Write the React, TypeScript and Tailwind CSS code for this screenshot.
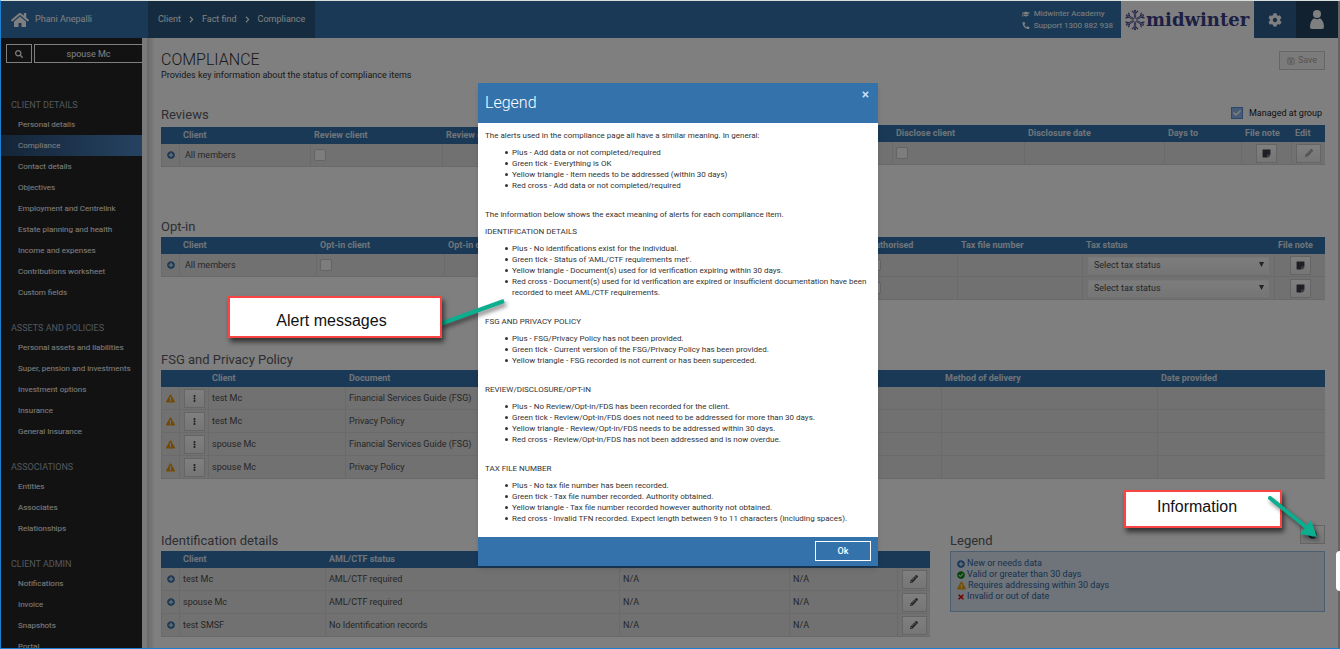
import { ReactNode } from "react";
import {
  FaCheck,
  FaCheckCircle,
  FaChevronRight,
  FaCog,
  FaEllipsisV,
  FaExclamationTriangle,
  FaGraduationCap,
  FaHome,
  FaInfoCircle,
  FaPencilAlt,
  FaPhoneAlt,
  FaPlusCircle,
  FaRegSave,
  FaSearch,
  FaStickyNote,
  FaTimes,
} from "react-icons/fa";

const NAV = [
  {
    title: "CLIENT DETAILS",
    items: [
      "Personal details",
      "Compliance",
      "Contact details",
      "Objectives",
      "Employment and Centrelink",
      "Estate planning and health",
      "Income and expenses",
      "Contributions worksheet",
      "Custom fields",
    ],
  },
  {
    title: "ASSETS AND POLICIES",
    items: [
      "Personal assets and liabilities",
      "Super, pension and investments",
      "Investment options",
      "Insurance",
      "General Insurance",
    ],
  },
  { title: "ASSOCIATIONS", items: ["Entities", "Associates", "Relationships"] },
  { title: "CLIENT ADMIN", items: ["Notifications", "Invoice", "Snapshots", "Portal"] },
];

const FSG_ROWS = [
  ["test Mc", "Financial Services Guide (FSG)"],
  ["test Mc", "Privacy Policy"],
  ["spouse Mc", "Financial Services Guide (FSG)"],
  ["spouse Mc", "Privacy Policy"],
];

const ID_ROWS = [
  ["test Mc", "AML/CTF required"],
  ["spouse Mc", "AML/CTF required"],
  ["test SMSF", "No Identification records"],
];

const LEGEND_GENERAL = [
  "Plus - Add data or not completed/required",
  "Green tick - Everything is OK",
  "Yellow triangle - Item needs to be addressed (within 30 days)",
  "Red cross - Add data or not completed/required",
];

const LEGEND_SECTIONS = [
  {
    title: "IDENTIFICATION DETAILS",
    items: [
      "Plus - No identifications exist for the individual.",
      "Green tick - Status of 'AML/CTF requirements met'.",
      "Yellow triangle - Document(s) used for id verification expiring within 30 days.",
      "Red cross - Document(s) used for id verification are expired or insufficient documentation have been recorded to meet AML/CTF requirements.",
    ],
  },
  {
    title: "FSG AND PRIVACY POLICY",
    items: [
      "Plus - FSG/Privacy Policy has not been provided.",
      "Green tick - Current version of the FSG/Privacy Policy has been provided.",
      "Yellow triangle - FSG recorded is not current or has been superceded.",
    ],
  },
  {
    title: "REVIEW/DISCLOSURE/OPT-IN",
    items: [
      "Plus - No Review/Opt-in/FDS has been recorded for the client.",
      "Green tick - Review/Opt-in/FDS does not need to be addressed for more than 30 days.",
      "Yellow triangle - Review/Opt-in/FDS needs to be addressed within 30 days.",
      "Red cross - Review/Opt-in/FDS has not been addressed and is now overdue.",
    ],
  },
  {
    title: "TAX FILE NUMBER",
    items: [
      "Plus - No tax file number has been recorded.",
      "Green tick - Tax file number recorded. Authority obtained.",
      "Yellow triangle - Tax file number recorded however authority not obtained.",
      "Red cross - Invalid TFN recorded. Expect length between 9 to 11 characters (including spaces).",
    ],
  },
];

function Snowflake() {
  const angles = [0, 60, 120, 180, 240, 300];
  return (
    <svg viewBox="0 0 24 24" className="size-[22px] shrink-0" fill="none" stroke="#45488c">
      {angles.map((deg) => (
        <g key={deg} transform={`rotate(${deg} 12 12)`}>
          <path d="M12 9V1" strokeWidth="2.4" />
          <path d="M8.600 2L12 5.200L15.400 2" strokeWidth="1.3" />
          <path d="M12 8.500V1.800" stroke="#ffffff" strokeWidth="0.6" />
        </g>
      ))}
      <circle cx="12" cy="12" r="2.4" strokeWidth="1" />
    </svg>
  );
}

function Header() {
  return (
    <header className="flex h-[37px] shrink-0 bg-[#3472ac] text-white">
      <a href="#home" className="flex w-[148px] items-center gap-[6px] pl-[11px]">
        <FaHome className="size-[18px]" />
        Phani Anepalli
      </a>
      <nav aria-label="Breadcrumb" className="flex items-center gap-2 bg-[#2a567f] px-[10px]">
        <a href="#client">Client</a>
        <FaChevronRight className="size-[7px] w-[5px]" />
        <a href="#fact-find">Fact find</a>
        <FaChevronRight className="size-[7px] w-[5px]" />
        <a href="#compliance">Compliance</a>
      </nav>
      <div className="ml-auto flex flex-col justify-center pr-2 text-[8px] leading-[12px]">
        <a href="#academy" className="flex items-center gap-1">
          <FaGraduationCap className="size-[8px]" />
          Midwinter Academy
        </a>
        <a href="#support" className="flex items-center gap-1">
          <FaPhoneAlt className="size-[7px] w-[8px]" />
          Support 1300 882 938
        </a>
      </div>
      <div className="flex w-[133px] items-center bg-white pl-[3px] text-[#3c3f88]">
        <Snowflake />
        <span className="font-['DejaVu_Serif',serif] text-[18px] leading-[24px] font-bold">midwinter</span>
      </div>
      <button aria-label="Settings" className="flex w-[42px] items-center justify-center bg-[#2e5e8e]">
        <FaCog className="size-[14px]" />
      </button>
      <button aria-label="Account" className="flex w-[42px] items-center justify-center bg-[#22425f]">
        <svg viewBox="0 0 14 19" className="h-[19px] w-[14px]" fill="currentColor">
          <circle cx="7" cy="4" r="4" />
          <path d="M4 8.200Q7 10.400 10 8.200Q14 11 14 17Q14 19 12 19H2Q0 19 0 17Q0 11 4 8.200Z" />
        </svg>
      </button>
    </header>
  );
}

function Sidebar() {
  return (
    <aside className="w-[142px] shrink-0 overflow-hidden bg-[#252525] text-white">
      <div className="flex gap-[2px] pt-[6px] pl-[6px]">
        <button aria-label="Search" className="flex h-[19px] w-[26px] items-center justify-center border border-white">
          <FaSearch className="size-[8px]" />
        </button>
        <input
          aria-label="Client name"
          defaultValue="spouse Mc"
          className="h-[19px] w-[108px] border border-r-0 border-white bg-transparent text-center"
        />
      </div>
      <nav aria-label="Client" className="pt-[17px]">
        {NAV.map((section) => (
          <section key={section.title} className="pt-4">
            <h2 className="pl-[11px] text-[#a3adba] leading-[18px]">{section.title}</h2>
            <ul className="text-[8px] leading-[21px]">
              {section.items.map((item) => (
                <li key={item}>
                  <a
                    href="#nav"
                    className={
                      item === "Compliance"
                        ? "block bg-linear-to-r from-[#2a4a70] to-[#4a86c4] pl-[18px]"
                        : "block pl-[18px]"
                    }
                  >
                    {item}
                  </a>
                </li>
              ))}
            </ul>
          </section>
        ))}
      </nav>
    </aside>
  );
}

type Column = { label: string; width: string };

function DataTable({ columns, label, children }: { columns: Column[]; label: string; children: ReactNode }) {
  return (
    <table
      aria-label={label}
      className="w-full table-fixed border-separate border-spacing-0 text-left text-[#4d4d4d]"
    >
      <thead>
        <tr className="h-[17px] bg-[#3472ac] text-[#dfe8f2]">
          {columns.map((col, i) => (
            <th key={i} className={`${col.width} overflow-hidden py-0 pl-1 font-bold whitespace-nowrap`}>
              {col.label}
            </th>
          ))}
        </tr>
      </thead>
      <tbody>{children}</tbody>
    </table>
  );
}

function Row({ children }: { children: ReactNode }) {
  return <tr className="h-[23px] bg-[#e2e2e2]">{children}</tr>;
}

function Cell({ children, className = "pl-[3px]" }: { children?: ReactNode; className?: string }) {
  return (
    <td className={`border-b border-l border-[#d4d4d4] p-0 leading-[11px] whitespace-nowrap ${className}`}>
      {children}
    </td>
  );
}

function PlusCell() {
  return (
    <Cell className="">
      <FaPlusCircle className="mx-auto size-[8px] text-[#3472ac]" />
    </Cell>
  );
}

function CheckCell({ label }: { label: string }) {
  return (
    <Cell>
      <input
        type="checkbox"
        aria-label={label}
        className="block size-[12px] appearance-none rounded-[2px] border border-[#c8c8c8] bg-[#fbfbfb]"
      />
    </Cell>
  );
}

function IconButton({ label, wide, disabled, children }: { label: string; wide?: boolean; disabled?: boolean; children: ReactNode }) {
  return (
    <button
      aria-label={label}
      disabled={disabled}
      className={`${wide ? "w-[25px]" : "w-[21px]"} mx-auto flex h-[19px] items-center justify-center border border-[#cacaca] bg-linear-to-b from-white to-[#ececec] text-[#444] disabled:text-[#999]`}
    >
      {children}
    </button>
  );
}

function NoteCell() {
  return (
    <Cell className="">
      <IconButton label="File note">
        <FaStickyNote className="size-[9px] text-[#3c3f48]" />
      </IconButton>
    </Cell>
  );
}

function TaxStatusSelect() {
  return (
    <div className="relative mr-[5px] ml-[2px]">
      <select
        aria-label="Tax status"
        className="block h-[17px] w-full appearance-none border border-[#f0f0f0] bg-linear-to-b from-[#fafafa] to-[#ebebeb] pl-[5px] leading-[15px]"
      >
        <option>Select tax status</option>
      </select>
      <svg viewBox="0 0 5 5" className="pointer-events-none absolute top-[5px] right-[5px] size-[5px]">
        <path d="M0 0H5L2.500 5Z" fill="#444" />
      </svg>
    </div>
  );
}

function SectionTitle({ children }: { children: ReactNode }) {
  return <h2 className="text-[13px] leading-5 text-[#5c5c66]">{children}</h2>;
}

function Reviews() {
  return (
    <div className="mt-6 grid grid-cols-2 items-start gap-5">
      <section>
        <div className="pb-[2px]">
          <SectionTitle>Reviews</SectionTitle>
        </div>
        <DataTable
          label="Reviews"
          columns={[
            { label: "", width: "w-[18px]" },
            { label: "Client", width: "w-[131px]" },
            { label: "Review client", width: "w-[132px]" },
            { label: "Review date", width: "w-[146px]" },
            { label: "", width: "w-[145px]" },
          ]}
        >
          <Row>
            <PlusCell />
            <Cell className="pl-[5px]">All members</Cell>
            <CheckCell label="Review client" />
            <Cell />
            <Cell />
          </Row>
        </DataTable>
      </section>
      <section>
        <div className="flex justify-end pr-[3px] pb-1">
          <label className="flex h-4 items-center gap-[6px] text-[#222]">
            <span className="grid place-items-center">
              <input
                type="checkbox"
                defaultChecked
                className="col-start-1 row-start-1 size-[12px] appearance-none border border-[#5a8fd6] bg-[#8fb7ea]"
              />
              <FaCheck className="pointer-events-none col-start-1 row-start-1 size-[8px] text-white" />
            </span>
            Managed at group
          </label>
        </div>
        <DataTable
          label="Disclosure"
          columns={[
            { label: "", width: "w-[139px]" },
            { label: "Disclose client", width: "w-[132px]" },
            { label: "Disclosure date", width: "w-[140px]" },
            { label: "Days to", width: "w-[77px]" },
            { label: "File note", width: "w-[50px]" },
            { label: "Edit", width: "w-[34px]" },
          ]}
        >
          <Row>
            <Cell />
            <CheckCell label="Disclose client" />
            <Cell />
            <Cell />
            <NoteCell />
            <Cell className="">
              <IconButton label="Edit" wide disabled>
                <FaPencilAlt className="size-[8px]" />
              </IconButton>
            </Cell>
          </Row>
        </DataTable>
      </section>
    </div>
  );
}

function OptIn() {
  return (
    <div className="mt-[50px] grid grid-cols-2 items-start gap-5">
      <section>
        <SectionTitle>Opt-in</SectionTitle>
        <DataTable
          label="Opt-in"
          columns={[
            { label: "", width: "w-[18px]" },
            { label: "Client", width: "w-[137px]" },
            { label: "Opt-in client", width: "w-[128px]" },
            { label: "Opt-in date", width: "w-[145px]" },
            { label: "", width: "w-[144px]" },
          ]}
        >
          <Row>
            <PlusCell />
            <Cell className="pl-[5px]">All members</Cell>
            <CheckCell label="Opt-in client" />
            <Cell />
            <Cell />
          </Row>
        </DataTable>
      </section>
      <section className="pt-5">
        <DataTable
          label="Tax file number"
          columns={[
            { label: "", width: "w-[112px]" },
            { label: "Authorised", width: "w-[92px]" },
            { label: "Tax file number", width: "w-[125px]" },
            { label: "Tax status", width: "w-[192px]" },
            { label: "File note", width: "w-[51px]" },
          ]}
        >
          {[0, 1].map((i) => (
            <Row key={i}>
              <Cell />
              <CheckCell label="Authorised" />
              <Cell />
              <Cell>
                <TaxStatusSelect />
              </Cell>
              <NoteCell />
            </Row>
          ))}
        </DataTable>
      </section>
    </div>
  );
}

function PrivacyPolicy() {
  return (
    <section className="mt-[50px]">
      <SectionTitle>FSG and Privacy Policy</SectionTitle>
      <DataTable
        label="FSG and Privacy Policy"
        columns={[
          { label: "", width: "w-[18px]" },
          { label: "", width: "w-[29px]" },
          { label: "Client", width: "w-[137px]" },
          { label: "Document", width: "w-[199px]" },
          { label: "", width: "w-[199px]" },
          { label: "", width: "w-[198px]" },
          { label: "Method of delivery", width: "w-[216px]" },
          { label: "Date provided", width: "w-[168px]" },
        ]}
      >
        {FSG_ROWS.map(([client, doc], i) => (
          <Row key={i}>
            <Cell className="">
              <FaExclamationTriangle className="mx-auto size-[9px] text-[#e8920c]" />
            </Cell>
            <Cell className="">
              <IconButton label="More">
                <FaEllipsisV className="size-[7px]" />
              </IconButton>
            </Cell>
            <Cell>{client}</Cell>
            <Cell>{doc}</Cell>
            <Cell />
            <Cell />
            <Cell />
            <Cell />
          </Row>
        ))}
      </DataTable>
    </section>
  );
}

function Identification() {
  return (
    <div className="mt-[52px] flex items-start gap-5">
      <section className="flex-1">
        <SectionTitle>Identification details</SectionTitle>
        <DataTable
          label="Identification details"
          columns={[
            { label: "", width: "w-[18px]" },
            { label: "Client", width: "w-[146px]" },
            { label: "AML/CTF status", width: "w-[294px]" },
            { label: "", width: "w-[170px]" },
            { label: "", width: "w-[108px]" },
            { label: "", width: "w-[33px]" },
          ]}
        >
          {ID_ROWS.map(([client, status]) => (
            <Row key={client}>
              <PlusCell />
              <Cell>{client}</Cell>
              <Cell>{status}</Cell>
              <Cell>N/A</Cell>
              <Cell>N/A</Cell>
              <Cell className="">
                <IconButton label={`Edit ${client}`} wide>
                  <FaPencilAlt className="size-[8px]" />
                </IconButton>
              </Cell>
            </Row>
          ))}
        </DataTable>
      </section>
      <section className="w-[375px]">
        <div className="flex h-5 items-center justify-between">
          <SectionTitle>Legend</SectionTitle>
          <div className="pb-[13px]">
            <IconButton label="Legend information" wide>
              <FaInfoCircle className="size-[9px] text-[#2a567f]" />
            </IconButton>
          </div>
        </div>
        <ul className="border border-[#98bfe3] bg-[#dce8f5] px-[6px] pt-[6px] pb-[9px] leading-[11px] text-[#30679c]">
          <li className="flex items-center gap-[2px]">
            <FaPlusCircle className="size-[8px] text-[#3472ac]" />
            New or needs data
          </li>
          <li className="flex items-center gap-[2px]">
            <FaCheckCircle className="size-[8px] text-[#0b8a0b]" />
            Valid or greater than 30 days
          </li>
          <li className="flex items-center gap-[2px]">
            <FaExclamationTriangle className="size-[9px] text-[#e8a00c]" />
            Requires addressing within 30 days
          </li>
          <li className="flex items-center gap-[2px]">
            <FaTimes className="size-[8px] text-[#e00000]" />
            Invalid or out of date
          </li>
        </ul>
      </section>
    </div>
  );
}

function LegendList({ items }: { items: string[] }) {
  return (
    <ul className="mt-[6px] pl-5">
      {items.map((item) => (
        <li
          key={item}
          className="flex gap-1 before:mt-1 before:size-[3px] before:shrink-0 before:rounded-full before:bg-[#333]"
        >
          {item}
        </li>
      ))}
    </ul>
  );
}

function LegendDialog() {
  return (
    <div
      role="dialog"
      aria-label="Legend"
      className="w-[400px] bg-white text-[8px] leading-[11px] text-[#333] shadow-md"
    >
      <div className="flex h-10 items-start justify-between bg-[#3472ac] px-[7px]">
        <h2 className="text-[16px] leading-[40px] font-light text-white">Legend</h2>
        <button aria-label="Close" className="pt-[7px] pr-[1px] text-[#c3d9ee]">
          <FaTimes className="size-[9px]" />
        </button>
      </div>
      <div className="px-[7px] pt-[7px] pb-[13px]">
        <p>The alerts used in the compliance page all have a similar meaning. In general:</p>
        <LegendList items={LEGEND_GENERAL} />
        <p className="mt-[18px] mb-[6px]">
          The information below shows the exact meaning of alerts for each compliance item.
        </p>
        <div className="flex flex-col gap-[18px]">
          {LEGEND_SECTIONS.map((section) => (
            <section key={section.title}>
              <h3>{section.title}</h3>
              <LegendList items={section.items} />
            </section>
          ))}
        </div>
      </div>
      <div className="flex justify-end bg-[#3472ac] px-[7px] pt-[4px] pb-[5px]">
        <button className="h-5 w-14 border border-white text-[9px] font-medium text-white">Ok</button>
      </div>
    </div>
  );
}

// callouts drawn over the page, with their pointer arrows
function Callouts() {
  return (
    <div className="pointer-events-none absolute inset-0 font-['Liberation_Sans',sans-serif] text-[16px] leading-5 text-[#111]">
      <svg className="absolute inset-0 h-full w-full drop-shadow-[2px_3px_2px_rgba(0,0,0,0.5)]">
        <path d="M440 324L504 301" stroke="#0bae8e" strokeWidth="4" />
      </svg>
      <div className="absolute top-[296px] left-[228px] flex h-[42px] w-[214px] items-center justify-center border-2 border-[#f94444] bg-white pt-[7px] pr-[7px] shadow-[2px_4px_5px_rgba(0,0,0,0.6)]">
        Alert messages
      </div>
      <div className="absolute top-[490px] left-[1124px] h-[38px] w-[158px] border-2 border-[#f94444] bg-white pt-[5px] pl-[31px] shadow-[2px_4px_5px_rgba(0,0,0,0.6)]">
        Information
      </div>
      <svg className="absolute inset-0 h-full w-full drop-shadow-[2px_3px_2px_rgba(0,0,0,0.5)]">
        <path d="M1270 498L1306 527" stroke="#0bae8e" strokeWidth="4" strokeLinecap="round" />
        <path d="M1317 537L1300 534L1311 520Z" fill="#0bae8e" />
      </svg>
      <div className="absolute top-[551px] right-0 h-10 w-1 rounded-l-[4px] bg-white" />
    </div>
  );
}

export default function App() {
  return (
    <div className="relative flex h-screen flex-col overflow-hidden bg-white pt-px font-[Roboto,sans-serif] text-[9px] leading-[11px]">
      <div className="flex min-h-0 flex-1 flex-col border-r-2 border-[#c8c8c8]">
        <Header />
        <div className="flex min-h-0 flex-1">
          <Sidebar />
          <div className="w-[5px] shrink-0 bg-[#f4f4f4]" />
          <div className="w-2 shrink-0 bg-linear-to-r from-[#d2d2d2] to-white" />
          <main className="min-w-0 flex-1 pt-3 pr-[13px] pl-[6px]">
            <div className="flex items-start justify-between">
              <div>
                <h1 className="text-[16px] leading-5 font-light text-[#333]">COMPLIANCE</h1>
                <p className="text-[#333]">Provides key information about the status of compliance items</p>
              </div>
              <button
                disabled
                className="mt-px flex h-[19px] w-[46px] items-center justify-center gap-[3px] border border-[#ccc] bg-[#f6f6f6] text-[#aaa]"
              >
                <FaRegSave className="size-[8px]" />
                Save
              </button>
            </div>
            <Reviews />
            <OptIn />
            <PrivacyPolicy />
            <Identification />
          </main>
        </div>
      </div>
      <div className="absolute inset-0 flex items-start justify-center border-t border-b border-l border-t-[#d9dfdb] border-b-[#1c80d0] border-l-[#1c80d0] bg-black/50 pt-[82px] pl-[15px]">
        <LegendDialog />
      </div>
      <Callouts />
    </div>
  );
}
